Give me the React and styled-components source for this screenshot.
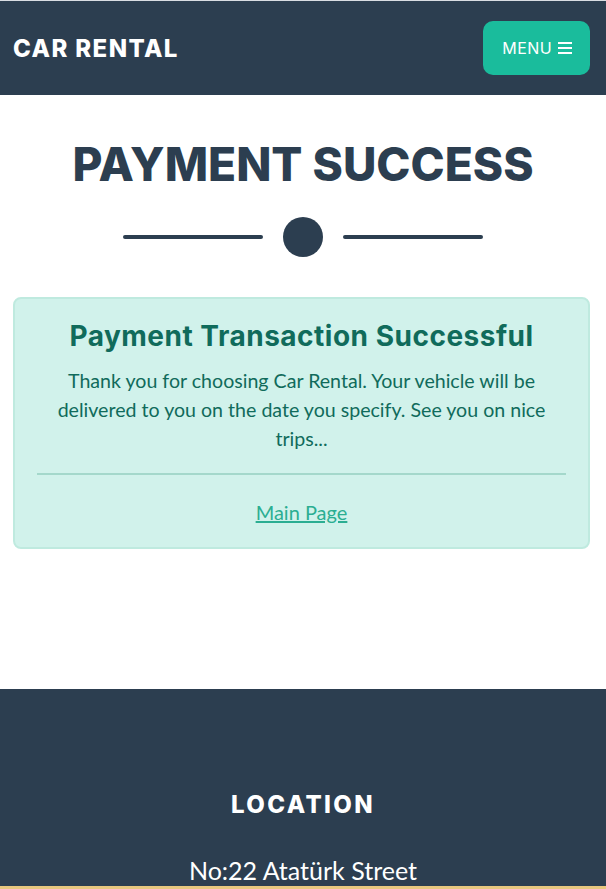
import styled, { createGlobalStyle } from "styled-components";

const GlobalStyle = createGlobalStyle`
  html, body {
    margin: 0;
    padding: 0;
    background: #ffffff;
  }
  body {
    font-family: Lato, "Liberation Sans", sans-serif;
    border-top: 1px solid #d9dde2;
  }
  * { box-sizing: border-box; }
`;

const heading = `"Inter", "DejaVu Sans", sans-serif`;

const Navbar = styled.nav`
  display: flex;
  align-items: center;
  justify-content: space-between;
  height: 94px;
  padding: 0 16px 0 13px;
  background: #2c3e50;
`;

const Brand = styled.a`
  font-family: ${heading};
  font-weight: 800;
  font-size: 24px;
  letter-spacing: 1.4px;
  color: #ffffff;
  text-decoration: none;
`;

const MenuButton = styled.button`
  display: flex;
  align-items: center;
  gap: 6px;
  height: 54px;
  padding: 0 18px 0 19px;
  border: none;
  border-radius: 10px;
  background: #1abc9c;
  color: #ffffff;
  font-family: ${heading};
  font-weight: 400;
  font-size: 16px;
  letter-spacing: 0.4px;
`;

const Main = styled.main`
  display: flex;
  flex-direction: column;
  align-items: center;
  padding: 46px 0 140px;
`;

const Title = styled.h1`
  margin: 0;
  font-family: ${heading};
  font-weight: 800;
  font-size: 46px;
  line-height: 1;
  color: #2c3e50;
`;

const Divider = styled.div`
  display: flex;
  align-items: center;
  gap: 20px;
  margin: 30px 0 40px;
`;

const Line = styled.span`
  width: 140px;
  height: 4px;
  border-radius: 2px;
  background: #2c3e50;
`;

const Dot = styled.span`
  width: 40px;
  height: 40px;
  border-radius: 50%;
  background: #2c3e50;
`;

const Alert = styled.section`
  align-self: stretch;
  margin: 0 16px 0 13px;
  padding: 19px 22px 23px;
  border: 2px solid #bfeadf;
  border-radius: 8px;
  background: #d1f2eb;
  color: #106b5b;
  text-align: center;
`;

const AlertTitle = styled.h4`
  margin: 0 0 12px;
  font-family: ${heading};
  font-weight: 700;
  font-size: 28px;
  line-height: 36px;
  letter-spacing: 0.5px;
  color: #106b5b;
`;

const AlertText = styled.p`
  margin: 0;
  font-size: 19.6px;
  line-height: 29px;
`;

const Rule = styled.hr`
  margin: 20px 0 25px;
  border: none;
  border-top: 2px solid #a4d8cb;
`;

const Link = styled.a`
  font-size: 20px;
  line-height: 24px;
  color: #2bae92;
  text-decoration: underline;
`;

const Footer = styled.footer`
  display: flex;
  flex-direction: column;
  align-items: center;
  padding: 101px 0 1px;
  background: #2c3e50;
  border-bottom: 3px solid #e8c77f;
  color: #ffffff;
`;

const FooterTitle = styled.h4`
  margin: 0 0 35px;
  font-family: ${heading};
  font-weight: 800;
  font-size: 24px;
  line-height: 30px;
  letter-spacing: 2.4px;
`;

const FooterText = styled.p`
  margin: 0;
  font-size: 25px;
  line-height: 30px;
`;

function MenuIcon() {
  return (
    <svg width="14" height="12" viewBox="0 0 14 12">
      <rect x="0" y="0" width="14" height="2" fill="#fff" />
      <rect x="0" y="5" width="14" height="2" fill="#fff" />
      <rect x="0" y="10" width="14" height="2" fill="#fff" />
    </svg>
  );
}

export default function App() {
  return (
    <>
      <GlobalStyle />
      <Navbar>
        <Brand href="#">CAR RENTAL</Brand>
        <MenuButton>
          MENU <MenuIcon />
        </MenuButton>
      </Navbar>
      <Main>
        <Title>PAYMENT SUCCESS</Title>
        <Divider>
          <Line />
          <Dot />
          <Line />
        </Divider>
        <Alert>
          <AlertTitle>Payment Transaction Successful</AlertTitle>
          <AlertText>
            Thank you for choosing Car Rental. Your vehicle will be delivered to
            you on the date you specify. See you on nice trips...
          </AlertText>
          <Rule />
          <Link href="#">Main Page</Link>
        </Alert>
      </Main>
      <Footer>
        <FooterTitle>LOCATION</FooterTitle>
        <FooterText>No:22 Atatürk Street</FooterText>
      </Footer>
    </>
  );
}
